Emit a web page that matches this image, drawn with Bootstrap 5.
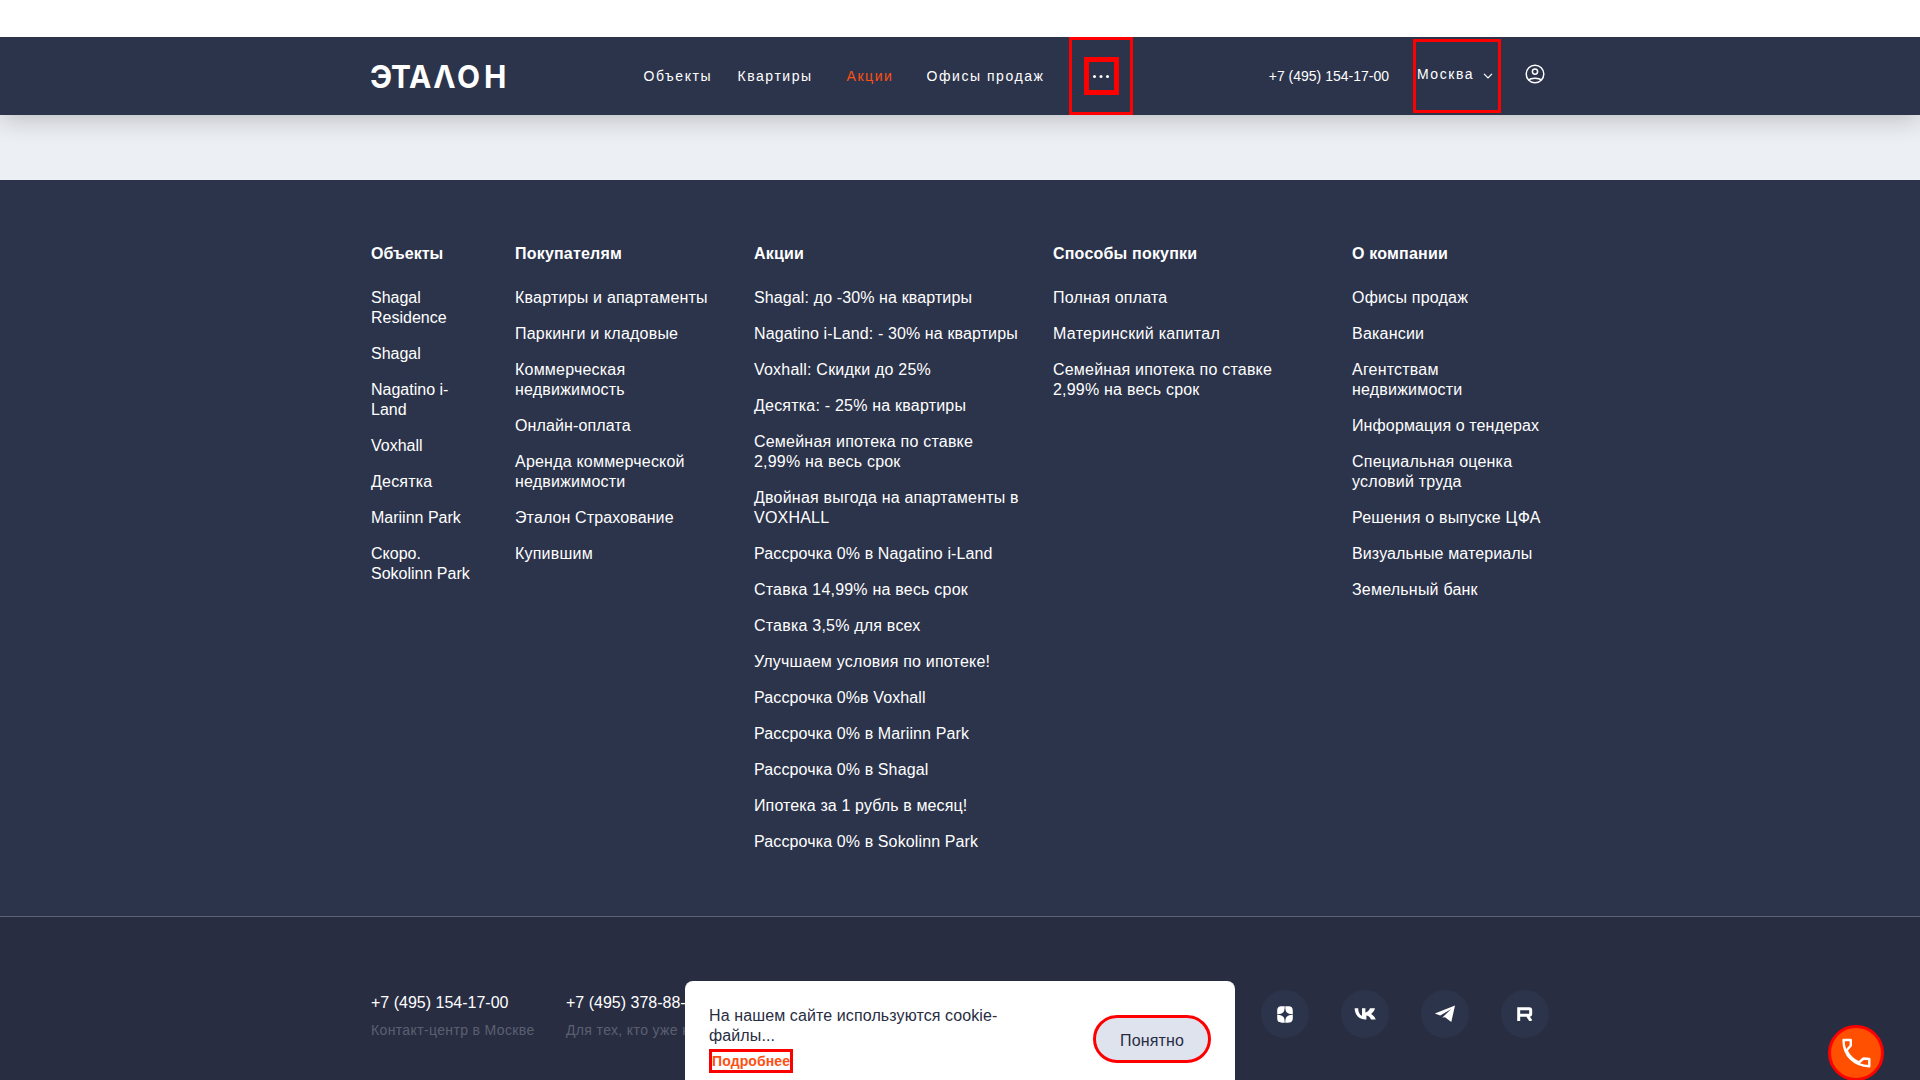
<!DOCTYPE html>
<html lang="ru">
<head>
<meta charset="utf-8">
<meta name="viewport" content="width=device-width, initial-scale=1">
<title>Эталон</title>
<link href="https://cdn.jsdelivr.net/npm/bootstrap@5.3.0/dist/css/bootstrap.min.css" rel="stylesheet">
<style>
  body { font-family: "Liberation Sans", Arial, sans-serif; font-size: 16px; line-height: 20px; color: #fff; background: #fff; height: 1080px; overflow: hidden; }
  a { color: inherit; text-decoration: none; }
  .site-head { margin-top: 37px; height: 77.5px; background: #2c344b; box-shadow: 0 4px 26px rgba(0,0,0,.22); clip-path: inset(0 0 -50px 0); position: relative; z-index: 2; }
  .wrap { width: 1178px; margin: 0 auto; }
  .head-item { font-size: 14px; letter-spacing: 1.55px; white-space: nowrap; }
  .hot { color: #ff4f12; }
  .logo-box { width: 140px; height: 30px; }
  .nav-group { margin-left: 132.5px; }
  .more-box { width: 64px; height: 77.5px; border: 3px solid #f00; margin-left: 24.5px; }
  .more-btn { width: 35px; height: 38px; border: 5px solid #f00; }
  .city-box { width: 88px; height: 74px; border: 3px solid #f00; margin-left: 24px; padding: 0 5px 0 1px; }
  .head-right { margin-right: 4px; }
  .user-link { margin-left: 24px; padding-bottom: 3px; }
  .band { height: 65px; background: #eceff4; }
  .foot-menu { height: 736.5px; background: #2c344b; padding-top: 64px; }
  .c1 { width: 144px; padding-right: 40px; }
  .c2 { width: 239px; padding-right: 30px; }
  .c3 { width: 299px; padding-right: 33px; }
  .c5 { width: 196px; }
  .foot-title { font-weight: 700; margin-bottom: 24px; font-size: 16px; line-height: 20px; letter-spacing: .2px; }
  .foot-list li { margin-bottom: 16px; }
  .ls-a { letter-spacing: .21px; }
  .ls-b { letter-spacing: .12px; }
  .foot-bottom { height: 164px; background: #282d42; border-top: 1px solid #5f6473; padding-top: 76px; }
  .tel-col { width: 195px; }
  .note { font-size: 14px; color: #5b6070; margin-top: 7px; white-space: nowrap; letter-spacing: .36px; }
  .tel { white-space: nowrap; }
  .soc-row { gap: 32px; margin-top: -3px; }
  .soc { width: 48px; height: 48px; background: #2c344b; }
  .cookie { position: absolute; left: 685px; top: 981px; width: 550px; height: 110px; background: #fff; color: #282d42; border-radius: 8px 8px 0 0; padding: 25px 24px 0 24px; z-index: 3; }
  .cookie-text { width: 310px; letter-spacing: .11px; }
  .more-link { display: block; border: 3px solid #f00; color: #ff4f12; font-weight: 700; font-size: 14px; line-height: 18px; height: 24px; width: 84px; white-space: nowrap; margin-top: 3px; }
  .ok-btn { width: 118px; height: 48px; border: 3px solid #f00; border-radius: 24px; background: #dfe3ee; color: #282d42; margin-top: 9px; letter-spacing: .15px; }
  .call-btn { position: absolute; left: 1828px; top: 1025px; width: 56px; height: 56px; border: 3px solid #f00; border-radius: 50%; background: #ff4f00; z-index: 3; }
</style>
<script src="https://cdn.jsdelivr.net/npm/bootstrap@5.3.0/dist/js/bootstrap.bundle.min.js"></script>
</head>
<body class="position-relative">
<header class="site-head">
  <div class="wrap d-flex align-items-center h-100">
    <a href="#" class="logo-box" aria-label="Эталон"><svg width="140" height="30" class="d-block overflow-visible"><text transform="scale(.95 1)" x="-1 21 40 65.500 90.500 119" y="26.500" font-family="Inter, sans-serif" font-weight="700" font-size="31.500" fill="#fff">ЭТАΛОН</text></svg></a>
    <nav class="nav-group d-flex align-items-center">
      <a href="#" class="head-item" style="width:94px">Объекты</a>
      <a href="#" class="head-item" style="width:109px">Квартиры</a>
      <a href="#" class="head-item hot" style="width:80px">Акции</a>
      <a href="#" class="head-item" style="width:118px">Офисы продаж</a>
      <div class="more-box d-flex align-items-center justify-content-center">
        <button class="more-btn bg-transparent p-0 d-flex align-items-center justify-content-center" aria-label="Ещё"><svg width="18" height="4" fill="#fff"><circle cx="2.500" cy="2.500" r="1.500"/><circle cx="9" cy="2.500" r="1.500"/><circle cx="15.500" cy="2.500" r="1.500"/></svg></button>
      </div>
    </nav>
    <div class="head-right d-flex align-items-center ms-auto">
      <a href="#" class="head-item" style="letter-spacing:0">+7 (495) 154-17-00</a>
      <div class="city-box d-flex align-items-center justify-content-between"><span class="head-item pb-1">Москва</span><svg width="10" height="6" fill="none" stroke="#fff" stroke-width="1.200"><path d="M1 .8 5 4.800 9 .8"/></svg></div>
      <a href="#" class="user-link" aria-label="Профиль"><svg width="20" height="20" class="d-block" fill="none" stroke="#fff" stroke-width="1.500"><circle cx="10" cy="10" r="8.800"/><circle cx="10" cy="7.600" r="2.600"/><path d="M3.800 16.200C5 14.600 7 14.200 10 14.200s5 .4 6.200 2"/></svg></a>
    </div>
  </div>
</header>
<div class="band"></div>
<footer>
  <div class="foot-menu">
    <div class="wrap d-flex">
      <div class="c1"><h6 class="foot-title" style="letter-spacing:0">Объекты</h6><ul class="foot-list list-unstyled"><li>Shagal Residence</li><li>Shagal</li><li>Nagatino i-Land</li><li>Voxhall</li><li class="ls-a">Десятка</li><li>Mariinn Park</li><li>Скоро. Sokolinn Park</li></ul></div>
      <div class="c2"><h6 class="foot-title">Покупателям</h6><ul class="foot-list list-unstyled ls-a"><li>Квартиры и апартаменты</li><li>Паркинги и кладовые</li><li>Коммерческая недвижимость</li><li class="ls-b">Онлайн-оплата</li><li>Аренда коммерческой недвижимости</li><li class="ls-b">Эталон Страхование</li><li>Купившим</li></ul></div>
      <div class="c3"><h6 class="foot-title">Акции</h6><ul class="foot-list list-unstyled ls-b"><li>Shagal: до -30% на квартиры</li><li>Nagatino i-Land: - 30% на квартиры</li><li class="ls-a">Voxhall: Скидки до 25%</li><li class="ls-a">Десятка: - 25% на квартиры</li><li class="ls-a">Семейная ипотека по ставке 2,99% на весь срок</li><li class="ls-a">Двойная выгода на апартаменты в VOXHALL</li><li>Рассрочка 0% в Nagatino i-Land</li><li class="ls-a">Ставка 14,99% на весь срок</li><li class="ls-a">Ставка 3,5% для всех</li><li class="ls-a">Улучшаем условия по ипотеке!</li><li>Рассрочка 0%в Voxhall</li><li>Рассрочка 0% в Mariinn Park</li><li>Рассрочка 0% в Shagal</li><li>Ипотека за 1 рубль в месяц!</li><li>Рассрочка 0% в Sokolinn Park</li></ul></div>
      <div class="c3"><h6 class="foot-title">Способы покупки</h6><ul class="foot-list list-unstyled ls-a"><li>Полная оплата</li><li style="letter-spacing:.3px">Материнский капитал</li><li>Семейная ипотека по ставке 2,99% на весь срок</li></ul></div>
      <div class="c5"><h6 class="foot-title">О компании</h6><ul class="foot-list list-unstyled ls-a"><li>Офисы продаж</li><li>Вакансии</li><li>Агентствам недвижимости</li><li class="ls-b">Информация о тендерах</li><li>Специальная оценка условий труда</li><li>Решения о выпуске ЦФА</li><li class="ls-b">Визуальные материалы</li><li>Земельный банк</li></ul></div>
    </div>
  </div>
  <div class="foot-bottom">
    <div class="wrap d-flex">
      <div class="tel-col"><div class="tel">+7 (495) 154-17-00</div><div class="note">Контакт-центр в Москве</div></div>
      <div><div class="tel">+7 (495) 378-88-</div><div class="note">Для тех, кто уже к</div></div>
      <div class="soc-row d-flex ms-auto">
        <a href="#" class="soc rounded-circle d-flex align-items-center justify-content-center" aria-label="Дзен"><svg width="16" height="17" viewBox="0 0 16 17" fill="#fff"><path d="M7.750.3C7.700 6 6.500 7.900.2 8.300V5.200C.2 1.600 1.600.3 5 .3zM8.250.3H11c3.400 0 4.800 1.300 4.800 4.900v3.100C9.500 7.900 8.300 6 8.250.3zM.2 8.700C6.500 9.100 7.700 11 7.750 16.700H5C1.600 16.700.2 15.400.2 11.800zM15.800 8.700v3.100c0 3.600-1.400 4.900-4.800 4.900H8.250C8.300 11 9.500 9.100 15.800 8.700z"/></svg></a>
        <a href="#" class="soc rounded-circle d-flex align-items-center justify-content-center" aria-label="VK"><svg width="22" height="12" viewBox="0 0 22 12" fill="#fff"><path d="M11.800 11.500C4.800 11.500.8 7 .6.300H4.200C4.300 5.200 6.400 7.200 8 7.700V.300h3.400V4.500C13.300 4.300 15.300 2.400 16 .300h5c-.6 2.800-2.600 4.700-4 5.600 1.400.7 3.700 2.500 4.700 5.600h-4.700c-.8-2.300-2.700-3.900-4.600-4.100v4.100z"/></svg></a>
        <a href="#" class="soc rounded-circle d-flex align-items-center justify-content-center" aria-label="Telegram"><svg width="22" height="18" viewBox="0 0 22 18" fill="#fff"><path d="M.8 8.600 21 .4 17.300 17 11 12.300 8.300 12.600 17 4.200 6.200 10.600z"/></svg></a>
        <a href="#" class="soc rounded-circle d-flex align-items-center justify-content-center" aria-label="Rutube"><svg width="16" height="14" viewBox="0 0 16 14"><path d="M1.700 14V1.700H12.300Q13.700 1.700 13.700 3.200V6.800Q13.700 8.300 12.300 8.300H2M10.300 8.500 14 14" fill="none" stroke="#fff" stroke-width="3"/></svg></a>
      </div>
    </div>
  </div>
</footer>
<div class="cookie d-flex justify-content-between">
  <div class="cookie-text">На нашем сайте используются cookie-файлы...<a href="#" class="more-link">Подробнее</a></div>
  <button class="ok-btn p-0 pt-1">Понятно</button>
</div>
<a href="#" class="call-btn d-flex align-items-center justify-content-center" aria-label="Позвонить"><svg width="30" height="30" viewBox="0 0 30 30" fill="none" stroke="#fff" stroke-width="2.400" stroke-linejoin="round"><path d="M2.500 2H9.800V7.500L5.500 12.500C8.300 18.300 12.800 22.300 18 24.500L22.500 20.500 28.300 21V28.300C13 27.800 2.500 17.500 2.500 2z"/></svg></a>
</body>
</html>
